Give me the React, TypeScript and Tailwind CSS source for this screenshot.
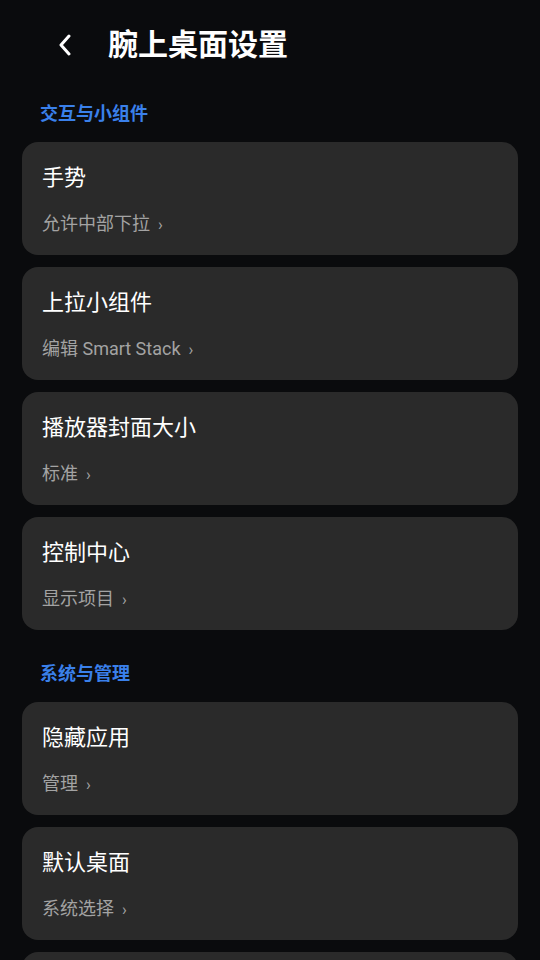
import React from 'react';

const font = { fontFamily: '"Roboto", "Noto Sans CJK SC", sans-serif' };

const sections = [
  {
    title: '交互与小组件',
    items: [
      { title: '手势', sub: '允许中部下拉' },
      { title: '上拉小组件', sub: '编辑 Smart Stack' },
      { title: '播放器封面大小', sub: '标准' },
      { title: '控制中心', sub: '显示项目' },
    ],
  },
  {
    title: '系统与管理',
    items: [
      { title: '隐藏应用', sub: '管理' },
      { title: '默认桌面', sub: '系统选择' },
      { title: '', sub: '' },
    ],
  },
];

function SettingCard({ title, sub }: { title: string; sub: string }) {
  return (
    <div className="bg-[#2a2a2a] rounded-[16px] px-5 pt-[22px] pb-[19px] h-[113px] shrink-0">
      {title && (
        <>
          <div className="text-[22px] leading-[28px] text-white">{title}</div>
          <div className="mt-5 text-[18px] leading-[24px] text-[#a3a3a3] flex items-center">
            <span>{sub}</span>
            <span className="ml-2 text-[16px] translate-y-[1px]">›</span>
          </div>
        </>
      )}
    </div>
  );
}

export default function App() {
  return (
    <div className="w-[540px] h-[960px] overflow-hidden bg-[#0a0b0d]" style={font}>
      {/* Header */}
      <div className="flex items-center h-[90px] pl-[56px]">
        <svg width="18" height="22" viewBox="0 0 18 22" className="text-white">
          <path d="M13 2 L5 11 L13 20" fill="none" stroke="currentColor" strokeWidth="3" strokeLinecap="round" strokeLinejoin="round" />
        </svg>
        <h1 className="ml-[34px] text-[30px] leading-[36px] font-bold text-white">腕上桌面设置</h1>
      </div>

      {sections.map((s, i) => (
        <div key={s.title} className={i === 0 ? '' : 'mt-5'}>
          <div className="pl-10 pt-[14px] pb-[18px] text-[18px] leading-[20px] font-bold text-[#3a80ea]">{s.title}</div>
          <div className="px-[22px] flex flex-col gap-3">
            {s.items.map((it, j) => (
              <SettingCard key={j} title={it.title} sub={it.sub} />
            ))}
          </div>
        </div>
      ))}
    </div>
  );
}
